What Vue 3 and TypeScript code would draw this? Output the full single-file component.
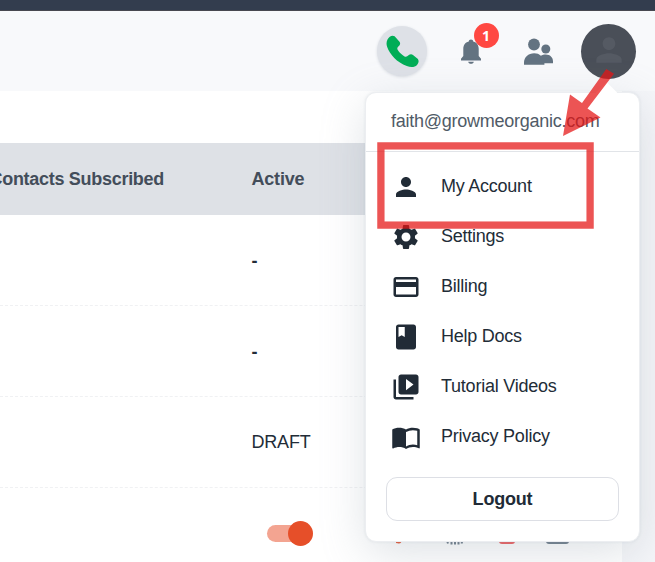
<script setup lang="ts">
interface MenuItem {
  label: string
  path: string
}

const items: MenuItem[] = [
  {
    label: 'My Account',
    path: 'M12 12c2.21 0 4-1.79 4-4s-1.79-4-4-4-4 1.79-4 4 1.79 4 4 4zm0 2c-2.67 0-8 1.34-8 4v2h16v-2c0-2.66-5.33-4-8-4z',
  },
  {
    label: 'Settings',
    path: 'M19.14 12.94c.04-.3.06-.61.06-.94 0-.32-.02-.64-.07-.94l2.03-1.58c.18-.14.23-.41.12-.61l-1.92-3.32c-.12-.22-.37-.29-.59-.22l-2.39.96c-.5-.38-1.03-.7-1.62-.94l-.36-2.54c-.04-.24-.24-.41-.48-.41h-3.84c-.24 0-.43.17-.47.41l-.36 2.54c-.59.24-1.13.57-1.62.94l-2.39-.96c-.22-.08-.47 0-.59.22L2.74 8.87c-.12.21-.08.47.12.61l2.03 1.58c-.05.3-.09.63-.09.94s.02.64.07.94l-2.03 1.58c-.18.14-.23.41-.12.61l1.92 3.32c.12.22.37.29.59.22l2.39-.96c.5.38 1.03.7 1.62.94l.36 2.54c.05.24.24.41.48.41h3.84c.24 0 .44-.17.47-.41l.36-2.54c.59-.24 1.13-.56 1.62-.94l2.39.96c.22.08.47 0 .59-.22l1.92-3.32c.12-.22.07-.47-.12-.61l-2.01-1.58zM12 15.6c-1.98 0-3.6-1.62-3.6-3.6s1.62-3.6 3.6-3.6 3.6 1.62 3.6 3.6-1.62 3.6-3.6 3.6z',
  },
  {
    label: 'Billing',
    path: 'M20 4H4c-1.11 0-1.99.89-1.99 2L2 18c0 1.11.89 2 2 2h16c1.11 0 2-.89 2-2V6c0-1.11-.89-2-2-2zm0 14H4v-6h16v6zm0-10H4V6h16v2z',
  },
  {
    label: 'Help Docs',
    path: 'M18 2H6c-1.1 0-2 .9-2 2v16c0 1.1.9 2 2 2h12c1.1 0 2-.9 2-2V4c0-1.1-.9-2-2-2zM6 4h5v8l-2.5-1.5L6 12V4z',
  },
  {
    label: 'Tutorial Videos',
    path: 'M4 6H2v14c0 1.1.9 2 2 2h14v-2H4V6zm16-4H8c-1.1 0-2 .9-2 2v12c0 1.1.9 2 2 2h12c1.1 0 2-.9 2-2V4c0-1.1-.9-2-2-2zm-8 12.500v-9l6 4.500-6 4.500z',
  },
  {
    label: 'Privacy Policy',
    path: 'M21 5c-1.11-.35-2.33-.5-3.500-.5-1.950 0-4.050.4-5.500 1.500-1.450-1.100-3.550-1.500-5.500-1.500S2.450 4.900 1 6v14.650c0 .25.25.5.5.5.1 0 .15-.05.25-.05C3.100 20.450 5.050 20 6.500 20c1.950 0 4.050.4 5.500 1.500 1.350-.85 3.800-1.500 5.500-1.500 1.650 0 3.350.3 4.750 1.050.1.05.15.05.25.05.25 0 .5-.25.5-.5V6c-.6-.45-1.250-.75-2-1zm0 13.500c-1.100-.35-2.300-.5-3.500-.5-1.700 0-4.150.65-5.500 1.500V8c1.350-.85 3.800-1.500 5.500-1.500 1.200 0 2.400.15 3.500.5v11.500z',
  },
]

const rows: string[] = ['-', '-', 'DRAFT']
</script>

<template>
  <div class="page">
    <div class="topbar"></div>
    <header class="header">
      <button class="phone" aria-label="Call">
        <svg width="34" height="34" viewBox="0 0 34 34">
          <path d="M2.500 5.500C4.200 2.300 7.300.7 9.600 2.300l4.700 5.100c1.300 1.500 1 3.500-.3 4.500-1.700 1.200-2.200 2.500-1.200 4.200 1.700 2.700 3.900 4.800 6.700 6.300 1.500.8 2.800.2 4-1.100 1.400-1.300 3.100-1.500 4.500-.4l4.300 3.700c1.900 1.600 1.600 4.200-.3 6.300-2.200 2.400-6 2.700-10.200 1.100C12 28.200 4.800 20.700 2.100 12.700c-.9-2.700-.7-5 .4-7.200z" />
        </svg>
      </button>
      <div class="bell">
        <svg width="22" height="25" viewBox="0 0 22 25">
          <path d="M11 .5c1.400 0 2.200.8 2.200 2 3.900.9 5.500 4 5.500 7.300v7.200l2.300 2.800v1.700H1v-1.700L3.300 17V9.800c0-3.300 1.600-6.400 5.500-7.300 0-1.200.8-2 2.200-2zM8.200 22.700h5.600c-.3 1.400-1.300 2.100-2.800 2.100s-2.500-.7-2.800-2.100z" />
        </svg>
        <span class="badge">1</span>
      </div>
      <svg class="people" width="30" height="28" viewBox="0 0 30 28">
        <circle cx="10" cy="6.500" r="5.900" />
        <circle cx="21.800" cy="11" r="4.500" />
        <path d="M0 26.800v-2.200c0-5.300 4.300-9.400 10.200-9.400 2.800 0 5 .8 6.700 2.500 1.400-.9 2.900-1.300 4.800-1.300 4.400 0 7.300 2.800 7.300 6.800v2h-8.600v1.600z" />
      </svg>
      <div class="avatar">
        <svg width="38" height="38" viewBox="0 0 24 24">
          <path :d="items[0].path" />
        </svg>
      </div>
    </header>

    <main class="content">
      <div class="row head">
        <div class="first"><span>Contacts Subscribed</span></div>
        <div class="active">Active</div>
      </div>
      <div v-for="(row, i) in rows" :key="i" class="row">
        <div class="first"></div>
        <div class="active" :class="{ dash: row === '-' }">{{ row }}</div>
      </div>
      <div class="row last">
        <div class="first"></div>
        <div class="toggle"><i></i></div>
        <svg class="actions" width="178" height="12" viewBox="0 0 178 12">
          <path fill="#e84e2a" d="M0 0h8L5 9.500Q4 11 0 10z" />
          <path fill="none" stroke="#687785" stroke-width="2" d="M50.500 6l1.500 4.500M55.500 6v5.500M59 6v5.500M62.500 6v5.500M67 6l-1.500 4.500" />
          <rect x="103" y="0" width="16" height="11" rx="3" fill="#f05555" />
          <rect x="150" y="0" width="23" height="11" rx="3" fill="#687785" />
        </svg>
      </div>
    </main>

    <aside class="menu">
      <div class="email"><span>faith@growmeorganic.com</span></div>
      <nav>
        <a v-for="item in items" :key="item.label">
          <svg width="30" height="30" viewBox="0 0 24 24"><path :d="item.path" /></svg>
          <span>{{ item.label }}</span>
        </a>
      </nav>
      <button class="logout">Logout</button>
    </aside>

    <svg class="marks" width="655" height="562" viewBox="0 0 655 562">
      <rect x="380.900" y="145.900" width="209.200" height="79.200" fill="none" stroke="#e51414" stroke-opacity=".73" stroke-width="7.300" />
      <path d="M606.300 69L614 73.800 587.500 108.500 600.500 117.500 563 136 570 94.500 582 103z" fill="#e51414" fill-opacity=".73" />
    </svg>
  </div>
</template>

<style>
body {
  overflow: hidden;
}
</style>

<style scoped>
.page {
  position: relative;
  width: 655px;
  height: 562px;
  overflow: hidden;
  background: #f5f6f9;
  color: #222c37;
  font-family: "Liberation Sans", Arial, sans-serif;
  font-size: 18px;
}
.topbar {
  height: 11px;
  box-sizing: border-box;
  background: #333d4e;
  border-bottom: 1px solid #484850;
}
.header {
  display: flex;
  align-items: center;
  box-sizing: border-box;
  height: 80px;
  padding-left: 377px;
  background: #f8f9fb;
}
.phone {
  display: flex;
  box-sizing: border-box;
  width: 50px;
  height: 50px;
  padding: 8px;
  border: 0;
  border-radius: 50%;
  background: #dee1e7;
  box-shadow: 0 1px 3px #d6dae0;
}
.phone svg {
  fill: #00ad56;
}
.bell {
  position: relative;
  display: flex;
  margin-left: 33px;
}
.bell svg,
.people {
  fill: #637381;
}
.badge {
  position: absolute;
  left: 13.500px;
  top: -15.500px;
  width: 25px;
  height: 25px;
  border-radius: 50%;
  background: #ff4842;
  color: #fff;
  font: bold 14px/26px "Open Sans", sans-serif;
  text-align: center;
}
.people {
  margin: 2px 0 0 42px;
}
.avatar {
  display: flex;
  align-items: center;
  justify-content: center;
  width: 55px;
  height: 55px;
  margin-left: 27px;
  border-radius: 50%;
  background: #4a4f58;
}
.avatar svg {
  fill: #555a63;
  transform: translateY(-1px);
}
.content {
  width: 622px;
  height: 471px;
  padding-top: 52px;
  box-sizing: border-box;
  background: #fff;
}
.row {
  display: flex;
  align-items: center;
  box-sizing: border-box;
  height: 91px;
  border-bottom: 1px dashed #f0f1f3;
}
.head {
  height: 72px;
  border: 0;
  background: #dee1e6;
  color: #434d5a;
  font-weight: bold;
}
.first {
  display: flex;
  justify-content: flex-end;
  flex: none;
  width: 164px;
  margin-right: 87.500px;
  letter-spacing: -0.07px;
  white-space: nowrap;
}
.head .first {
  letter-spacing: -0.29px;
}
.active {
  letter-spacing: -0.2px;
}
.last {
  border: 0;
}
.dash {
  font-weight: bold;
  transform: translateY(1px);
}
.toggle {
  display: flex;
  align-items: center;
  justify-content: flex-end;
  flex: none;
  width: 46px;
  height: 17px;
  margin-left: 15.500px;
  border-radius: 9px;
  background: linear-gradient(90deg, #f3a491 38px, transparent 38px);
}
.toggle i {
  width: 25px;
  height: 25px;
  border-radius: 50%;
  background: #e64f29;
}
.actions {
  flex: none;
  margin-left: 83px;
  transform: translateY(5px);
}
.menu {
  position: absolute;
  left: 365px;
  top: 92px;
  width: 275px;
  height: 450px;
  box-sizing: border-box;
  border: 1px solid #eceef1;
  border-radius: 11px;
  background: #fff;
  box-shadow: 0 0 3px rgba(145, 158, 171, 0.18), 0 12px 46px -2px rgba(145, 158, 171, 0.32);
}
.menu::before {
  content: "";
  position: absolute;
  right: 25px;
  top: -8px;
  width: 15px;
  height: 15px;
  background: #fff;
  transform: rotate(45deg);
}
.email {
  position: relative;
  box-sizing: border-box;
  height: 59px;
  padding: 17px 0 0 25px;
  border-bottom: 1px solid #e1e4e8;
  color: #505b67;
  line-height: 22px;
  letter-spacing: -0.26px;
}
nav {
  padding-top: 10px;
}
nav a {
  display: flex;
  align-items: center;
  height: 50px;
  padding-left: 25px;
  letter-spacing: -0.24px;
}
nav svg {
  margin-right: 20px;
  fill: #212b36;
}
nav span {
  transform: translateY(-1px);
}
.logout {
  display: block;
  width: 233px;
  height: 44px;
  margin: 15px 0 0 20px;
  border: 1px solid #dddfe5;
  border-radius: 11px;
  background: #fff;
  color: #212b36;
  font: bold 18px "Liberation Sans", Arial, sans-serif;
  letter-spacing: -0.2px;
}
.marks {
  position: absolute;
  left: 0;
  top: 0;
}
</style>
